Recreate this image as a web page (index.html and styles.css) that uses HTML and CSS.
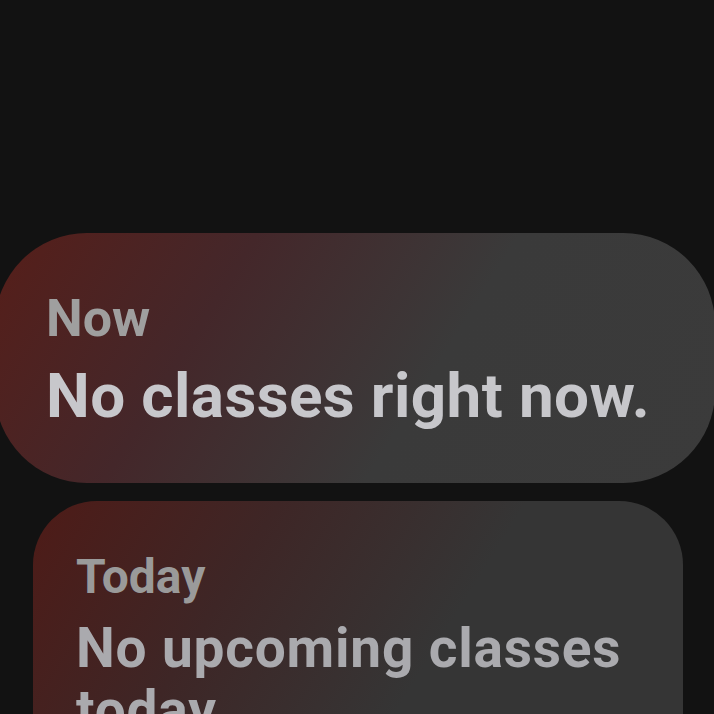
FILE: index.html
```html
<!DOCTYPE html>
<html lang="en">
<head>
  <meta charset="UTF-8">
  <meta name="viewport" content="width=device-width, initial-scale=1.0">
  <title>Classes</title>
  <link rel="stylesheet" href="styles.css">
</head>
<body>

  <!-- Schedule list -->
  <div class="schedule">
    <div class="card card-now">
      <p class="card-label">Now</p>
      <p class="card-title">No classes right now.</p>
    </div>

    <div class="card card-today">
      <p class="card-label">Today</p>
      <p class="card-title">No upcoming classes today</p>
    </div>
  </div>

</body>
</html>
```

FILE: styles.css
```css
* {
  margin: 0;
  padding: 0;
  box-sizing: border-box;
}

body {
  font-family: Roboto, "Noto Sans", sans-serif;
  background-color: #121212;
  width: 714px;
  height: 714px;
  overflow: hidden;
}

/* list of cards */
.schedule {
  display: flex;
  flex-direction: column;
  align-items: center;
  gap: 18px;
  padding-top: 233px;
}

.card {
  display: flex;
  flex-direction: column;
  background: linear-gradient(122deg, #561e19 0%, #44272a 30%, #3a3a3a 60%, #3b3b3b 100%);
}

.card-label {
  color: #9f9f9f;
  font-weight: 700;
}

.card-title {
  color: #c7c7cb;
  font-weight: 700;
}

/* first card, full size */
.card-now {
  width: 720px;
  height: 250px;
  margin-left: -4px;
  border-radius: 92px;
  padding: 56px 30px 0 51px;
  gap: 12px;
}

.card-now .card-label {
  font-size: 52px;
  line-height: 60px;
}

.card-now .card-title {
  font-size: 62px;
  line-height: 70px;
  letter-spacing: 0.4px;
}

/* second card, a little dimmer */
.card-today {
  width: 650px;
  margin-left: 2px;
  border-radius: 64px;
  padding: 48px 40px 40px 43px;
  gap: 12px;
  background: linear-gradient(122deg, #4e1b17 0%, #3e2626 30%, #353535 60%, #353535 100%);
}

.card-today .card-label {
  font-size: 48px;
  line-height: 56px;
  color: #9a9a9a;
}

.card-today .card-title {
  font-size: 55px;
  line-height: 62px;
  letter-spacing: 0.8px;
  color: #aaaaae;
}
```
